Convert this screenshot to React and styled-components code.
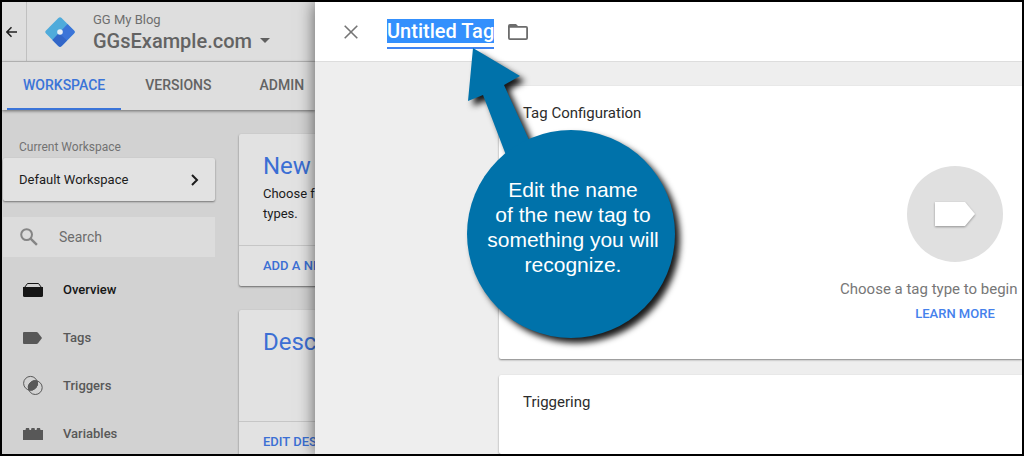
import React, { useState } from "react";
import styled, { createGlobalStyle } from "styled-components";

const navItems = [
  { label: "Overview", icon: OverviewIcon },
  { label: "Tags", icon: TagIcon },
  { label: "Triggers", icon: TriggerIcon },
  { label: "Variables", icon: VariableIcon },
];

export default function App() {
  const [tagName, setTagName] = useState("Untitled Tag");
  const [search, setSearch] = useState("");
  const [section, setSection] = useState("Overview");

  return (
    <Frame>
      <GlobalStyle />
      <Workspace>
        <Header>
          <BackButton aria-label="Back">
            <svg width="11" height="12" viewBox="0 0 11 12" fill="none" stroke="#222" strokeWidth="1.5">
              <path d="M11 6H1M5.5 1.2L.9 6l4.6 4.8" />
            </svg>
          </BackButton>
          <LogoIcon />
          <Account>
            <AccountName>GG My Blog</AccountName>
            <ContainerButton>
              GGsExample.com
              <svg width="10" height="5" viewBox="0 0 10 5">
                <path d="M0 0h10L5 5z" fill="#5f5f5f" />
              </svg>
            </ContainerButton>
          </Account>
        </Header>
        <Tabs>
          <Tab href="#workspace" $active>WORKSPACE</Tab>
          <Tab href="#versions">VERSIONS</Tab>
          <Tab href="#admin">ADMIN</Tab>
        </Tabs>

        <Columns>
          <Sidebar>
            <SidebarLabel>Current Workspace</SidebarLabel>
            <WorkspaceButton>
              Default Workspace
              <svg width="9" height="12" viewBox="0 0 9 12" fill="none" stroke="#1c1c1c" strokeWidth="2">
                <path d="M2 1l5 5-5 5" />
              </svg>
            </WorkspaceButton>
            <SearchBox>
              <svg width="18" height="18" viewBox="0 0 18 18" fill="none" stroke="#858585" strokeWidth="2">
                <circle cx="6.6" cy="6.6" r="5.4" />
                <path d="M10.6 10.6l6.3 6.3" strokeWidth="2.4" />
              </svg>
              <SearchInput
                aria-label="Search"
                placeholder="Search"
                value={search}
                onChange={(e) => setSearch(e.target.value)}
              />
            </SearchBox>
            <Nav>
              {navItems.map(({ label, icon: Icon }) => (
                <NavLink
                  key={label}
                  href={`#${label.toLowerCase()}`}
                  $active={section === label}
                  onClick={() => setSection(label)}
                >
                  <Icon />
                  {label}
                </NavLink>
              ))}
            </Nav>
          </Sidebar>

          <Cards>
            <Card>
              <CardBody>
                <CardTitle>New Tag</CardTitle>
                <CardText>Choose from over 50 tag types.</CardText>
              </CardBody>
              <CardAction href="#new-tag">ADD A NEW TAG</CardAction>
            </Card>
            <Card>
              <CardBody>
                <CardTitle>Description</CardTitle>
              </CardBody>
              <CardAction href="#description">EDIT DESCRIPTION</CardAction>
            </Card>
          </Cards>
        </Columns>
      </Workspace>

      <Panel>
        <PanelHeader>
          <IconButton aria-label="Close">
            <svg width="14" height="14" viewBox="0 0 14 14" stroke="#757575" strokeWidth="1.6">
              <path d="M.7.7l12.6 12.6M13.3.7L.7 13.3" />
            </svg>
          </IconButton>
          <NameField>
            <NameInput
              aria-label="Tag name"
              value={tagName}
              onChange={(e) => setTagName(e.target.value)}
            />
          </NameField>
          <IconButton aria-label="Choose folder">
            <svg width="20" height="16" viewBox="0 0 20 16">
              <path
                fill="#6c6c6c"
                fillRule="evenodd"
                d="M2 0h6l2 2h8a2 2 0 0 1 2 2v10a2 2 0 0 1-2 2H2a2 2 0 0 1-2-2V2a2 2 0 0 1 2-2zM1.8 3.8v10.4h16.4V3.8z"
              />
            </svg>
          </IconButton>
        </PanelHeader>
        <PanelBody>
          <Section>
            <SectionTitle>Tag Configuration</SectionTitle>
            <TypePicker>
              <TypeCircle aria-label="Choose a tag type">
                <TypeIcon viewBox="0 0 42 28">
                  <path d="M1 2h30l10 12-10 12H1z" fill="#fff" />
                </TypeIcon>
              </TypeCircle>
              <PickerText>Choose a tag type to begin</PickerText>
              <LearnMore href="#learn-more">LEARN MORE</LearnMore>
            </TypePicker>
          </Section>
          <Section>
            <SectionTitle>Triggering</SectionTitle>
          </Section>
        </PanelBody>
      </Panel>

      <Callout>
        <CalloutShape viewBox="0 0 230 310">
          <path
            fill="#0072aa"
            d="M14 8L61 36 45 45 76 113 50 123 24 55 9 61z"
          />
          <circle cx="112" cy="194" r="104" fill="#0072aa" />
        </CalloutShape>
        <CalloutText>
          Edit the name<br />
          of the new tag to<br />
          something you will<br />
          recognize.
        </CalloutText>
      </Callout>
    </Frame>
  );
}

function LogoIcon() {
  return (
    <Logo viewBox="0 0 30 30">
      <path d="M13.4 1a2.300 2.300 0 0 1 3.200 0L29 13.400a2.300 2.300 0 0 1 0 3.200L16.600 29a2.300 2.300 0 0 1-3.200 0L1 16.600a2.300 2.300 0 0 1 0-3.200z" fill="#4fabdb" />
      <path d="M22.500 7L29 13.400a2.300 2.300 0 0 1 0 3.200L16.600 29a2.300 2.300 0 0 1-3.200 0L7.500 23z" fill="#3b74d8" />
      <path d="M7.500 23l6.500-7 8 7.500L16.600 29a2.300 2.300 0 0 1-3.200 0z" fill="#3266c8" />
      <circle cx="15" cy="15" r="2.800" fill="#e6eef6" />
    </Logo>
  );
}

function OverviewIcon() {
  return (
    <svg width="20" height="20" viewBox="0 0 20 20" fill="currentColor">
      <path d="M0 8h20v8.500a1.500 1.500 0 0 1-1.500 1.500h-17A1.500 1.500 0 0 1 0 16.500z" />
      <path d="M1.500 8.500L4.500 4.500h11l3 4" fill="none" stroke="currentColor" />
    </svg>
  );
}

function TagIcon() {
  return (
    <svg width="20" height="20" viewBox="0 0 20 20" fill="currentColor">
      <path d="M1 5h12.500a2 2 0 0 1 1.500.7L19 11l-4 5.300a2 2 0 0 1-1.500.7H1a1 1 0 0 1-1-1V6a1 1 0 0 1 1-1z" />
    </svg>
  );
}

function TriggerIcon() {
  return (
    <svg width="20" height="20" viewBox="0 0 20 20" fill="none" stroke="currentColor">
      <circle cx="7.500" cy="8.300" r="6.900" />
      <circle cx="12.300" cy="12.600" r="6.900" />
      <path d="M14.200 6A6.900 6.900 0 0 1 5.600 14.900 6.900 6.900 0 0 1 14.200 6z" fill="currentColor" />
    </svg>
  );
}

function VariableIcon() {
  return (
    <svg width="20" height="20" viewBox="0 0 20 20" fill="currentColor">
      <path d="M0 7h2.500l.5-2h3l.5 2h1.500l.5-2h3l.5 2h1.500l.5-2h3l.5 2H20v10H0z" />
    </svg>
  );
}

const GlobalStyle = createGlobalStyle`
  * {
    box-sizing: border-box;
  }

  body {
    margin: 0;
    font-family: Roboto, "Liberation Sans", sans-serif;
  }

  button {
    border: 0;
    padding: 0;
    background: none;
    color: inherit;
    font: inherit;
    cursor: pointer;
  }

  a {
    text-decoration: none;
  }

  svg {
    flex-shrink: 0;
  }
`;

const Frame = styled.div`
  position: relative;
  display: grid;
  grid-template-columns: 313px minmax(0, 1fr);
  height: 100vh;
  border: 2px solid #000;
  overflow: hidden;
`;

const Workspace = styled.div`
  min-width: 0;
  overflow: hidden;
  background: #d2d2d2;
`;

const Header = styled.header`
  display: flex;
  align-items: center;
  height: 60px;
  background: #dedede;
  border-bottom: 1px solid #c0c0c0;
`;

const BackButton = styled.button`
  display: flex;
  align-items: center;
  justify-content: center;
  align-self: stretch;
  width: 25px;
  padding-right: 6px;
  border-right: 1px solid #c0c0c0;
`;

const Logo = styled.svg`
  width: 30px;
  height: 30px;
  margin: 0 18px;
`;

const Account = styled.div`
  display: flex;
  flex-direction: column;
`;

const AccountName = styled.div`
  font-size: 13px;
  line-height: 18px;
  color: #6e6e6e;
`;

const ContainerButton = styled.button`
  display: flex;
  align-items: center;
  gap: 8px;
  font-size: 20px;
  font-weight: 500;
  line-height: 24px;
  color: #636363;
`;

const Tabs = styled.nav`
  position: relative;
  display: flex;
  height: 48px;
  padding-left: 5px;
  background: #dedede;
  box-shadow: 0 1px 3px rgba(0, 0, 0, 0.5);
`;

const Tab = styled.a`
  padding: 0 ${(props) => (props.$active ? "16px" : "24px")};
  border-bottom: 2px solid ${(props) => (props.$active ? "#3b74d8" : "transparent")};
  color: ${(props) => (props.$active ? "#3b74d8" : "#636363")};
  font-size: 14px;
  font-weight: 500;
  line-height: 47px;
`;

const Columns = styled.div`
  display: flex;
`;

const Sidebar = styled.aside`
  flex: 0 0 214px;
  padding: 26px 1px 0;
`;

const SidebarLabel = styled.div`
  padding: 0 16px;
  font-size: 12px;
  line-height: 22px;
  color: #727272;
`;

const WorkspaceButton = styled.button`
  display: flex;
  align-items: center;
  justify-content: space-between;
  width: 100%;
  height: 43px;
  padding: 0 16px;
  border-radius: 2px;
  background: #e2e2e2;
  box-shadow: 0 1px 2px rgba(0, 0, 0, 0.45);
  font-size: 13px;
  color: #1c1c1c;
`;

const SearchBox = styled.label`
  display: flex;
  align-items: center;
  gap: 21px;
  height: 40px;
  margin-top: 16px;
  padding: 0 17px;
  background: #dcdcdc;
`;

const SearchInput = styled.input`
  min-width: 0;
  width: 100%;
  padding: 0;
  border: 0;
  outline: 0;
  background: none;
  font: inherit;
  font-size: 14px;

  &::placeholder {
    color: #6c6c6c;
    opacity: 1;
  }
`;

const Nav = styled.nav`
  display: flex;
  flex-direction: column;
  margin-top: 8px;
`;

const NavLink = styled.a`
  display: flex;
  align-items: center;
  gap: 20px;
  height: 48px;
  padding-left: 20px;
  color: ${(props) => (props.$active ? "#161616" : "#585858")};
  font-size: 13px;
  font-weight: 500;
`;

const Cards = styled.main`
  display: flex;
  flex-direction: column;
  gap: 24px;
  padding: 24px 23px;
`;

const Card = styled.section`
  width: 214px;
  border-radius: 2px;
  background: #e2e2e2;
  box-shadow: 0 1px 2px rgba(0, 0, 0, 0.5);
`;

const CardBody = styled.div`
  height: 112px;
  padding: 16px 24px;
  border-bottom: 1px solid #c6c6c6;
`;

const CardTitle = styled.h2`
  margin: 0;
  font-size: 24px;
  font-weight: 400;
  line-height: 32px;
  color: #3b6fd4;
`;

const CardText = styled.p`
  margin: 2px 0 0;
  font-size: 13px;
  line-height: 20px;
  color: #1c1c1c;
`;

const CardAction = styled.a`
  display: block;
  padding: 0 24px;
  font-size: 13px;
  font-weight: 500;
  line-height: 40px;
  color: #3b6fd4;
`;

const Panel = styled.div`
  position: relative;
  display: flex;
  flex-direction: column;
  min-width: 0;
  background: #eee;
  box-shadow: 0 0 16px rgba(0, 0, 0, 0.6);
`;

const PanelHeader = styled.header`
  display: flex;
  flex-shrink: 0;
  align-items: center;
  height: 60px;
  padding: 0 29px;
  background: #fff;
  border-bottom: 1px solid #ddd;
`;

const IconButton = styled.button`
  display: flex;
`;

const NameField = styled.div`
  margin: 5px 14px 0 29px;
  padding-bottom: 4px;
  border-bottom: 2px solid #3f84f3;
`;

const NameInput = styled.input`
  display: block;
  width: 107px;
  height: 24px;
  padding: 0;
  border: 0;
  outline: 0;
  background: #3490fd;
  color: #fff;
  font: inherit;
  font-size: 20px;
  font-weight: 500;
`;

const PanelBody = styled.div`
  display: flex;
  flex: 1;
  flex-direction: column;
  gap: 16px;
  min-height: 0;
  padding: 24px 0 0 184px;
  overflow: hidden;
`;

const Section = styled.section`
  flex-shrink: 0;
  padding: 16px 24px 33px;
  border-radius: 2px 0 0 2px;
  background: #fff;
  box-shadow: 0 1px 2px rgba(0, 0, 0, 0.45);

  &:last-child {
    flex: 1 0 auto;
  }
`;

const SectionTitle = styled.h3`
  margin: 0;
  font-size: 15px;
  font-weight: 400;
  line-height: 22px;
  color: #2c2c2c;
`;

/* runs past the right edge of the panel, so only its left part is seen */
const TypePicker = styled.div`
  display: flex;
  flex-direction: column;
  align-items: center;
  width: 230px;
  margin: 42px -72px 0 auto;
`;

const TypeCircle = styled.button`
  display: flex;
  align-items: center;
  justify-content: center;
  width: 96px;
  height: 96px;
  border-radius: 50%;
  background: #e0e0e0;
`;

const TypeIcon = styled.svg`
  width: 42px;
  height: 28px;
  filter: drop-shadow(0 1px 1px rgba(0, 0, 0, 0.35));
`;

const PickerText = styled.p`
  align-self: flex-start;
  margin: 16px 0 0;
  font-size: 15px;
  line-height: 22px;
  color: #777;
`;

const LearnMore = styled.a`
  margin-top: 2px;
  font-size: 13px;
  font-weight: 500;
  line-height: 24px;
  color: #4581ec;
`;

const Callout = styled.div`
  position: absolute;
  top: 38px;
  left: 457px;
  width: 230px;
  height: 310px;
`;

const CalloutShape = styled.svg`
  display: block;
  width: 100%;
  height: 100%;
  overflow: visible;
  filter: drop-shadow(5px 5px 3px rgba(0, 0, 0, 0.9));
`;

const CalloutText = styled.p`
  position: absolute;
  top: 137px;
  left: 14px;
  width: 200px;
  margin: 0;
  color: #fff;
  font-family: "Liberation Sans", Arial, sans-serif;
  font-size: 21px;
  line-height: 25px;
  text-align: center;
`;
